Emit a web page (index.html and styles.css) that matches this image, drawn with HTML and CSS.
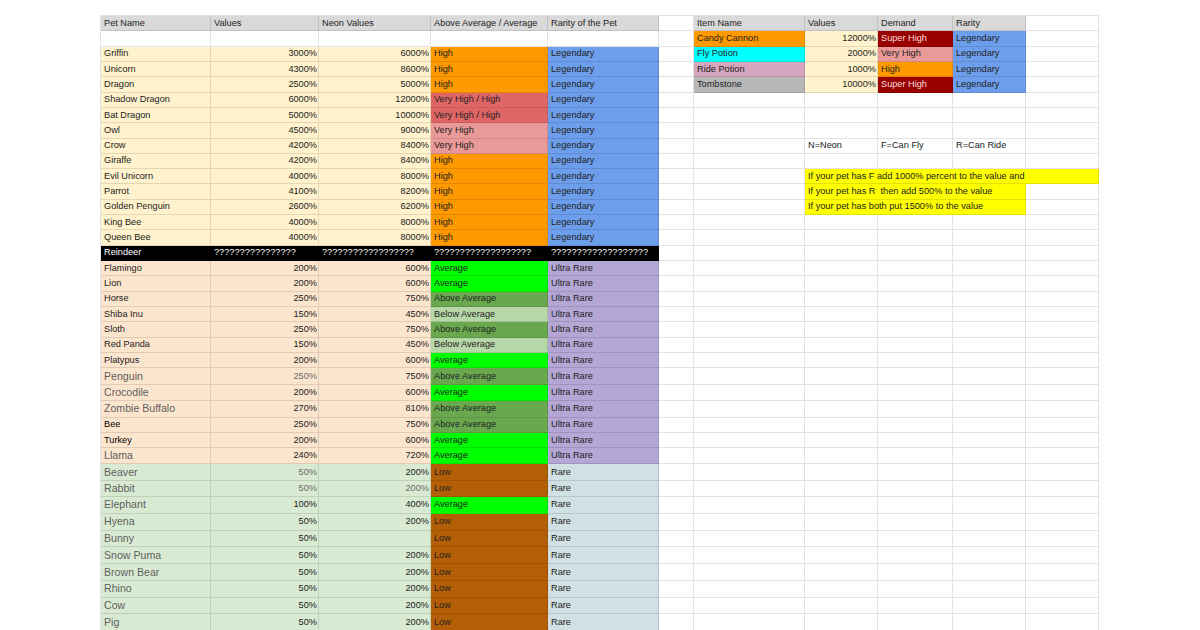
FILE: index.html
```html
<!DOCTYPE html>
<html lang="en">
<head>
<meta charset="utf-8">
<title>Pet Values</title>
<link rel="stylesheet" href="styles.css">
</head>
<body>
<table class="sheet">
<colgroup>
<col class="ca"><col class="cb"><col class="cc"><col class="cd"><col class="ce"><col class="cf"><col class="cg"><col class="ch"><col class="ci"><col class="cj"><col class="ck">
</colgroup>
<tbody>
<tr class="rs"><td class="hd">Pet Name</td><td class="hd">Values</td><td class="hd">Neon Values</td><td class="hd">Above Average / Average</td><td class="hd">Rarity of the Pet</td><td></td><td class="hd">Item Name</td><td class="hd">Values</td><td class="hd">Demand</td><td class="hd">Rarity</td><td></td></tr>
<tr class="rs"><td></td><td></td><td></td><td></td><td></td><td></td><td class="or">Candy Cannon</td><td class="ly n">12000%</td><td class="dr">Super High</td><td class="bl">Legendary</td><td></td></tr>
<tr class="rs"><td class="ly">Griffin</td><td class="ly n">3000%</td><td class="ly n">6000%</td><td class="or">High</td><td class="bl">Legendary</td><td></td><td class="cy">Fly Potion</td><td class="ly n">2000%</td><td class="pk">Very High</td><td class="bl">Legendary</td><td></td></tr>
<tr class="rs"><td class="ly">Unicorn</td><td class="ly n">4300%</td><td class="ly n">8600%</td><td class="or">High</td><td class="bl">Legendary</td><td></td><td class="mv">Ride Potion</td><td class="ly n">1000%</td><td class="or">High</td><td class="bl">Legendary</td><td></td></tr>
<tr class="rs"><td class="ly">Dragon</td><td class="ly n">2500%</td><td class="ly n">5000%</td><td class="or">High</td><td class="bl">Legendary</td><td></td><td class="gy">Tombstone</td><td class="ly n">10000%</td><td class="dr">Super High</td><td class="bl">Legendary</td><td></td></tr>
<tr class="rs"><td class="ly">Shadow Dragon</td><td class="ly n">6000%</td><td class="ly n">12000%</td><td class="rd">Very High / High</td><td class="bl">Legendary</td><td></td><td></td><td></td><td></td><td></td><td></td></tr>
<tr class="rs"><td class="ly">Bat Dragon</td><td class="ly n">5000%</td><td class="ly n">10000%</td><td class="rd">Very High / High</td><td class="bl">Legendary</td><td></td><td></td><td></td><td></td><td></td><td></td></tr>
<tr class="rs"><td class="ly">Owl</td><td class="ly n">4500%</td><td class="ly n">9000%</td><td class="pk">Very High</td><td class="bl">Legendary</td><td></td><td></td><td></td><td></td><td></td><td></td></tr>
<tr class="rs"><td class="ly">Crow</td><td class="ly n">4200%</td><td class="ly n">8400%</td><td class="pk">Very High</td><td class="bl">Legendary</td><td></td><td></td><td>N=Neon</td><td>F=Can Fly</td><td>R=Can Ride</td><td></td></tr>
<tr class="rs"><td class="ly">Giraffe</td><td class="ly n">4200%</td><td class="ly n">8400%</td><td class="or">High</td><td class="bl">Legendary</td><td></td><td></td><td></td><td></td><td></td><td></td></tr>
<tr class="rs"><td class="ly">Evil Unicorn</td><td class="ly n">4000%</td><td class="ly n">8000%</td><td class="or">High</td><td class="bl">Legendary</td><td></td><td></td><td class="ye" colspan="4">If your pet has F add 1000% percent to the value and</td></tr>
<tr class="rs"><td class="ly">Parrot</td><td class="ly n">4100%</td><td class="ly n">8200%</td><td class="or">High</td><td class="bl">Legendary</td><td></td><td></td><td class="ye" colspan="3">If your pet has R&nbsp; then add 500% to the value</td><td></td></tr>
<tr class="rs"><td class="ly">Golden Penguin</td><td class="ly n">2600%</td><td class="ly n">6200%</td><td class="or">High</td><td class="bl">Legendary</td><td></td><td></td><td class="ye" colspan="3">If your pet has both put 1500% to the value</td><td></td></tr>
<tr class="rs"><td class="ly">King Bee</td><td class="ly n">4000%</td><td class="ly n">8000%</td><td class="or">High</td><td class="bl">Legendary</td><td></td><td></td><td></td><td></td><td></td><td></td></tr>
<tr class="rs"><td class="ly">Queen Bee</td><td class="ly n">4000%</td><td class="ly n">8000%</td><td class="or">High</td><td class="bl">Legendary</td><td></td><td></td><td></td><td></td><td></td><td></td></tr>
<tr class="rs"><td class="bk">Reindeer</td><td class="bk">????????????????</td><td class="bk">??????????????????</td><td class="bk">???????????????????</td><td class="bk">???????????????????</td><td></td><td></td><td></td><td></td><td></td><td></td></tr>
<tr class="rs"><td class="pc">Flamingo</td><td class="pc n">200%</td><td class="pc n">600%</td><td class="gn">Average</td><td class="pu">Ultra Rare</td><td></td><td></td><td></td><td></td><td></td><td></td></tr>
<tr class="rs"><td class="pc">Lion</td><td class="pc n">200%</td><td class="pc n">600%</td><td class="gn">Average</td><td class="pu">Ultra Rare</td><td></td><td></td><td></td><td></td><td></td><td></td></tr>
<tr class="rs"><td class="pc">Horse</td><td class="pc n">250%</td><td class="pc n">750%</td><td class="ag">Above Average</td><td class="pu">Ultra Rare</td><td></td><td></td><td></td><td></td><td></td><td></td></tr>
<tr class="rs"><td class="pc">Shiba Inu</td><td class="pc n">150%</td><td class="pc n">450%</td><td class="bg">Below Average</td><td class="pu">Ultra Rare</td><td></td><td></td><td></td><td></td><td></td><td></td></tr>
<tr class="rs"><td class="pc">Sloth</td><td class="pc n">250%</td><td class="pc n">750%</td><td class="ag">Above Average</td><td class="pu">Ultra Rare</td><td></td><td></td><td></td><td></td><td></td><td></td></tr>
<tr class="rs"><td class="pc">Red Panda</td><td class="pc n">150%</td><td class="pc n">450%</td><td class="bg">Below Average</td><td class="pu">Ultra Rare</td><td></td><td></td><td></td><td></td><td></td><td></td></tr>
<tr class="rs"><td class="pc">Platypus</td><td class="pc n">200%</td><td class="pc n">600%</td><td class="gn">Average</td><td class="pu">Ultra Rare</td><td></td><td></td><td></td><td></td><td></td><td></td></tr>
<tr class="rl"><td class="pc big">Penguin</td><td class="pc n mu">250%</td><td class="pc n">750%</td><td class="ag">Above Average</td><td class="pu">Ultra Rare</td><td></td><td></td><td></td><td></td><td></td><td></td></tr>
<tr class="rm"><td class="pc big">Crocodile</td><td class="pc n">200%</td><td class="pc n">600%</td><td class="gn">Average</td><td class="pu">Ultra Rare</td><td></td><td></td><td></td><td></td><td></td><td></td></tr>
<tr class="rl"><td class="pc big">Zombie Buffalo</td><td class="pc n">270%</td><td class="pc n">810%</td><td class="ag">Above Average</td><td class="pu">Ultra Rare</td><td></td><td></td><td></td><td></td><td></td><td></td></tr>
<tr class="rs"><td class="pc dk">Bee</td><td class="pc n">250%</td><td class="pc n">750%</td><td class="ag">Above Average</td><td class="pu">Ultra Rare</td><td></td><td></td><td></td><td></td><td></td><td></td></tr>
<tr class="rs"><td class="pc dk">Turkey</td><td class="pc n">200%</td><td class="pc n">600%</td><td class="gn">Average</td><td class="pu">Ultra Rare</td><td></td><td></td><td></td><td></td><td></td><td></td></tr>
<tr class="rm"><td class="pc big">Llama</td><td class="pc n">240%</td><td class="pc n">720%</td><td class="gn">Average</td><td class="pu">Ultra Rare</td><td></td><td></td><td></td><td></td><td></td><td></td></tr>
<tr class="rx"><td class="lg big">Beaver</td><td class="lg n mu">50%</td><td class="lg n">200%</td><td class="br">Low</td><td class="lb">Rare</td><td></td><td></td><td></td><td></td><td></td><td></td></tr>
<tr class="rs"><td class="lg big">Rabbit</td><td class="lg n mu">50%</td><td class="lg n mu">200%</td><td class="br">Low</td><td class="lb">Rare</td><td></td><td></td><td></td><td></td><td></td><td></td></tr>
<tr class="rx"><td class="lg big">Elephant</td><td class="lg n">100%</td><td class="lg n">400%</td><td class="gn">Average</td><td class="lb">Rare</td><td></td><td></td><td></td><td></td><td></td><td></td></tr>
<tr class="rl"><td class="lg big">Hyena</td><td class="lg n">50%</td><td class="lg n">200%</td><td class="br">Low</td><td class="lb">Rare</td><td></td><td></td><td></td><td></td><td></td><td></td></tr>
<tr class="rl"><td class="lg big">Bunny</td><td class="lg n">50%</td><td class="lg n"></td><td class="br">Low</td><td class="lb">Rare</td><td></td><td></td><td></td><td></td><td></td><td></td></tr>
<tr class="rl"><td class="lg big">Snow Puma</td><td class="lg n">50%</td><td class="lg n">200%</td><td class="br">Low</td><td class="lb">Rare</td><td></td><td></td><td></td><td></td><td></td><td></td></tr>
<tr class="rl"><td class="lg big">Brown Bear</td><td class="lg n">50%</td><td class="lg n">200%</td><td class="br">Low</td><td class="lb">Rare</td><td></td><td></td><td></td><td></td><td></td><td></td></tr>
<tr class="rl"><td class="lg big">Rhino</td><td class="lg n">50%</td><td class="lg n">200%</td><td class="br">Low</td><td class="lb">Rare</td><td></td><td></td><td></td><td></td><td></td><td></td></tr>
<tr class="rl"><td class="lg big">Cow</td><td class="lg n">50%</td><td class="lg n">200%</td><td class="br">Low</td><td class="lb">Rare</td><td></td><td></td><td></td><td></td><td></td><td></td></tr>
<tr class="rl"><td class="lg big">Pig</td><td class="lg n">50%</td><td class="lg n">200%</td><td class="br">Low</td><td class="lb">Rare</td><td></td><td></td><td></td><td></td><td></td><td></td></tr>
</tbody>
</table>
</body>
</html>
```

FILE: styles.css
```css
html, body {
  margin: 0;
  padding: 0;
  background: #ffffff;
  overflow: hidden;
}

body {
  font-family: "Liberation Sans", Arial, sans-serif;
}

.sheet {
  margin: 15px 0 0 100px;
  border-collapse: separate;
  border-spacing: 0;
  table-layout: fixed;
  width: 998px;
  border-top: 1px solid #e2e2e2;
  border-left: 1px solid #e2e2e2;
}

.ca { width: 110px; }
.cb { width: 108px; }
.cc { width: 112px; }
.cd { width: 117px; }
.ce { width: 111px; }
.cf { width: 35px; }
.cg { width: 111px; }
.ch { width: 73px; }
.ci { width: 75px; }
.cj { width: 73px; }
.ck { width: 73px; }

.rs { height: 15.32px; }
.rm { height: 16px; }
.rl { height: 16.7px; }
.rx { height: 17.3px; }

.sheet td {
  border-right: 1px solid rgba(0, 0, 0, 0.11);
  border-bottom: 1px solid rgba(0, 0, 0, 0.11);
  padding: 0 2px 0 3px;
  font-size: 9.2px;
  line-height: 11px;
  color: #222222;
  white-space: nowrap;
  overflow: hidden;
  vertical-align: middle;
}

.sheet td.n { text-align: right; padding-right: 1px; }

.sheet td.big { font-size: 10.6px; color: #5f5f5f; }
.sheet td.mu { color: #6a6a6a; }
.sheet td.dk { color: #000000; }

.hd { background: #d9d9d9; }
.ly { background: #fff2cc; }
.or { background: #ff9900; }
.rd { background: #e06666; }
.pk { background: #ea9999; }
.bl { background: #6d9eeb; }
.sheet td.bk { background: #000000; color: #ffffff; }
.pc { background: #fce5cd; }
.gn { background: #00ff00; }
.ag { background: #6aa84f; }
.bg { background: #b6d7a8; }
.pu { background: #b4a7d6; }
.lg { background: #d9ead3; }
.br { background: #b45f06; }
.lb { background: #d0e0e3; }
.cy { background: #00ffff; }
.mv { background: #d5a6bd; }
.gy { background: #b7b7b7; }
.sheet td.dr { background: #990000; color: #f6dede; }
.ye { background: #ffff00; }
```
